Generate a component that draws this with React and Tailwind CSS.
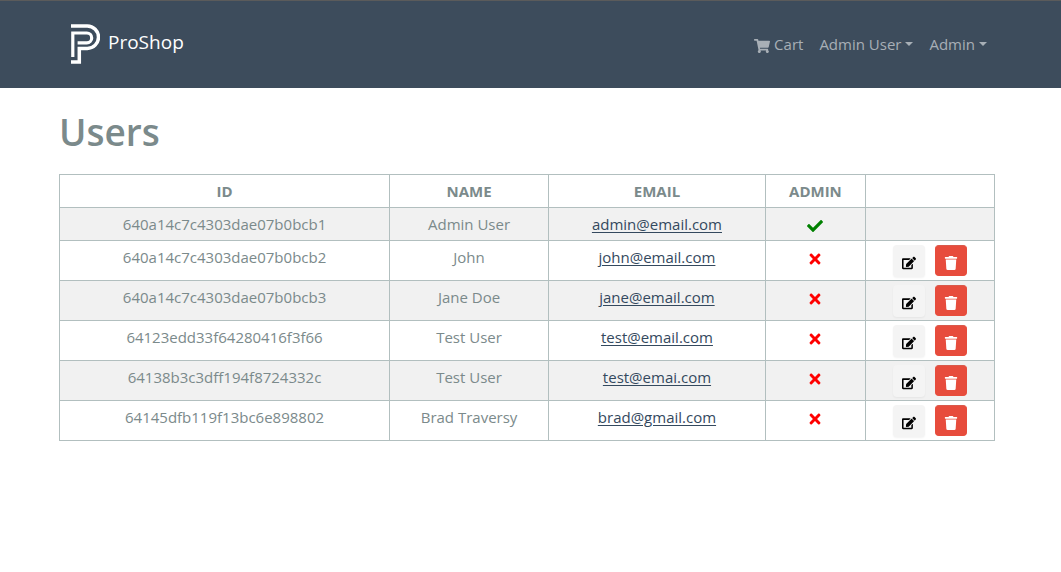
import React from "react";
import { FaCheck, FaEdit, FaShoppingCart, FaTimes, FaTrash } from "react-icons/fa";

const users = [
  { id: "640a14c7c4303dae07b0bcb1", name: "Admin User", email: "admin@email.com", admin: true },
  { id: "640a14c7c4303dae07b0bcb2", name: "John", email: "john@email.com" },
  { id: "640a14c7c4303dae07b0bcb3", name: "Jane Doe", email: "jane@email.com" },
  { id: "64123edd33f64280416f3f66", name: "Test User", email: "test@email.com" },
  { id: "64138b3c3dff194f8724332c", name: "Test User", email: "test@emai.com" },
  { id: "64145dfb119f13bc6e898802", name: "Brad Traversy", email: "brad@gmail.com" },
];

function Logo() {
  return (
    <svg className="h-10 w-[30px]" viewBox="0 0 30 40" fill="none" stroke="#fff" aria-hidden="true">
      <path d="M1 2H17.3A11.2 11.2 0 0 1 17.3 24.4H9.3V38H1" strokeWidth="3.5" />
      <path d="M2.8 33V9H16.8A4.9 4.9 0 0 1 16.8 18.8H7.6" strokeWidth="3.2" />
    </svg>
  );
}

function NavMenu({ label }) {
  return (
    <button type="button" aria-haspopup="menu" className="flex items-center gap-1 px-2 py-2">
      {label}
      <span className="border-x-4 border-t-4 border-x-transparent border-t-[#a8afb6]" />
    </button>
  );
}

function Header() {
  return (
    <header className="border-t border-[#5b5b5b] bg-[#3d4c5c] pr-[7px]">
      <nav className="mx-auto flex h-[87px] max-w-[960px] items-center justify-between px-3 pb-[2px]">
        <a href="#home" className="flex items-center gap-2 pl-[11px] text-[19px] leading-7 text-white">
          <Logo />
          <span className="pb-1">ProShop</span>
        </a>
        <div className="flex items-center text-[15px] leading-6 text-[#a8afb6]">
          <a href="#cart" className="flex items-center gap-1 px-2 py-2">
            <FaShoppingCart className="mt-1 size-4" />
            Cart
          </a>
          <NavMenu label="Admin User" />
          <NavMenu label="Admin" />
        </div>
      </nav>
    </header>
  );
}

function UserRow({ user }) {
  return (
    <tr className="align-top odd:bg-[#f1f1f1]">
      <td className="border border-[#b2bfbf] p-1">{user.id}</td>
      <td className="border border-[#b2bfbf] p-1">{user.name}</td>
      <td className="border border-[#b2bfbf] p-1">
        <a href={`mailto:${user.email}`} className="text-[#34495e] underline underline-offset-2">
          {user.email}
        </a>
      </td>
      <td className="border border-[#b2bfbf] p-1">
        <div className="flex h-6 items-center justify-center pt-1">
          {user.admin ? (
            <FaCheck className="size-4 text-[green]" aria-label="Yes" />
          ) : (
            <FaTimes className="size-4 text-[red]" aria-label="No" />
          )}
        </div>
      </td>
      <td className="border border-[#b2bfbf] px-1">
        {!user.admin && (
          <div className="flex h-[39px] items-start justify-center gap-[10px] pt-1">
            <button
              type="button"
              aria-label={`Edit ${user.name}`}
              className="flex size-8 items-center justify-center rounded bg-[#f4f4f4] pt-1 text-black shadow-xs"
            >
              <FaEdit className="size-[14px]" />
            </button>
            <button
              type="button"
              aria-label={`Delete ${user.name}`}
              className="flex h-[31px] w-8 items-center justify-center rounded border border-[#e74c3c] border-t-[#d9594b] bg-[#e74c3c] pt-1 text-white"
            >
              <FaTrash className="size-[14px]" />
            </button>
          </div>
        )}
      </td>
    </tr>
  );
}

export default function App() {
  return (
    <div className="min-h-screen bg-white font-['Open_Sans','Noto_Sans',sans-serif] text-[#7b8a8b]">
      <Header />
      <main className="pr-[7px]">
        <div className="mx-auto max-w-[960px] px-3 pt-5">
          <h1 className="mb-[18px] text-[37px] leading-[48px] font-semibold">Users</h1>
          <table className="w-full table-fixed border-collapse text-center text-[15px] leading-6">
            <colgroup>
              <col className="w-[35.3%]" />
              <col className="w-[17%]" />
              <col className="w-[23.2%]" />
              <col className="w-[10.7%]" />
              <col className="w-[13.8%]" />
            </colgroup>
            <thead>
              <tr>
                <th className="border border-[#b2bfbf] p-1">ID</th>
                <th className="border border-[#b2bfbf] p-1">NAME</th>
                <th className="border border-[#b2bfbf] p-1">EMAIL</th>
                <th className="border border-[#b2bfbf] p-1">ADMIN</th>
                <td className="border border-[#b2bfbf] p-1" />
              </tr>
            </thead>
            <tbody>
              {users.map((user) => (
                <UserRow key={user.id} user={user} />
              ))}
            </tbody>
          </table>
        </div>
      </main>
    </div>
  );
}
